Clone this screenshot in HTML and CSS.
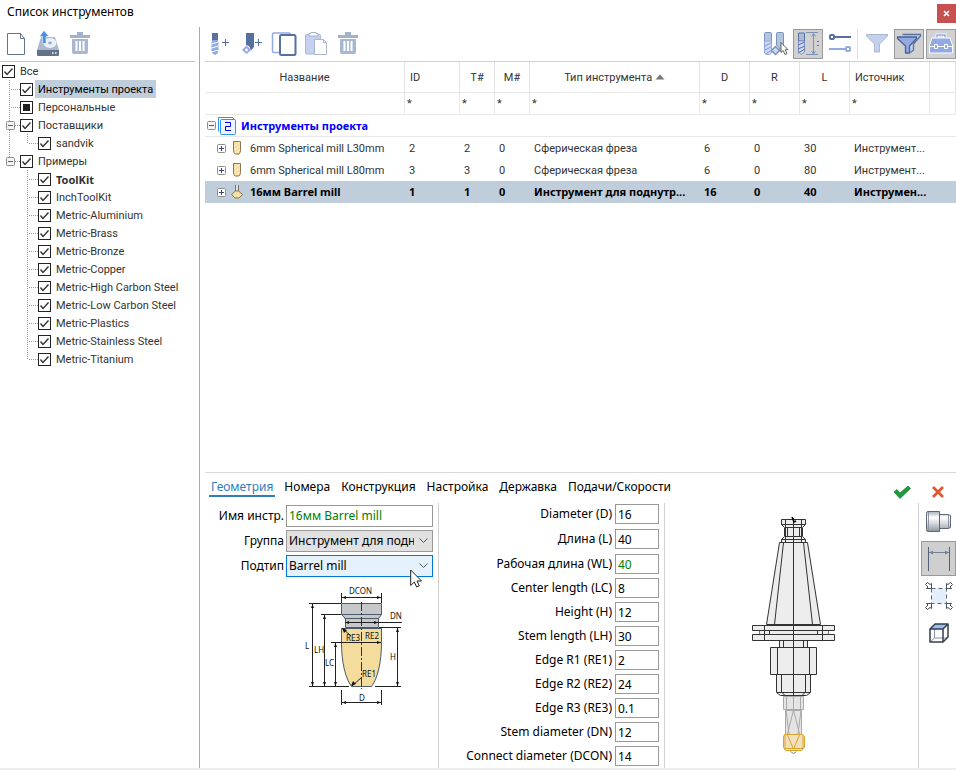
FILE: index.html
```html
<!DOCTYPE html>
<html lang="ru">
<head>
  <meta charset="UTF-8">
  <title>Список инструментов</title>
  <link rel="stylesheet" href="styles.css">
</head>
<body>

  <!-- Shared icons -->
  <svg class="sprite" width="0" height="0">
    <symbol id="i-trash" viewBox="0 0 30 30">
      <path d="M5 6h20v3H5zM12 3h6v3h-6z" fill="#a3b2cb"/>
      <path d="M7 10h16v13q0 2-2 2H9q-2 0-2-2z" fill="#a9b8d0"/>
      <path d="M11.500 12v10M15 12v10M18.500 12v10" stroke="#fff" stroke-width="2"/>
    </symbol>
    <symbol id="i-plus" viewBox="0 0 9 9">
      <rect x=".5" y=".5" width="8" height="8" rx="1" fill="#fff" stroke="#8e8e8e"/>
      <path d="M2 4.500h5M4.500 2v5" stroke="#34487c"/>
    </symbol>
    <symbol id="i-minus" viewBox="0 0 9 9">
      <rect x=".5" y=".5" width="8" height="8" rx="1" fill="#f4f4f4" stroke="#8e8e8e"/>
      <path d="M2 4.500h5" stroke="#3f5fb0"/>
    </symbol>
    <symbol id="i-mill" viewBox="0 0 12 14">
      <path d="M2.500.500h7v9q0 2-1.500 3.500h-4Q2.500 11.500 2.500 9.500z" fill="#f6dfa4" stroke="#85764f"/>
      <path d="M3 5l6-4M3 9l6-4M4 12l5-3" stroke="#fff0c8"/>
    </symbol>
    <symbol id="i-cursor" viewBox="0 0 12 19">
      <path d="M.7 1v15.500l3.600-3.500 2.400 5 2.600-1.200-2.300-4.800h4.600z" fill="#fff" stroke="#222"/>
    </symbol>
  </svg>

  <header class="titlebar">
    <h1>Список инструментов</h1>
    <button class="close" aria-label="Закрыть"><svg width="7" height="7" viewBox="0 0 7 7"><path d="M1 1l5 5M6 1L1 6" stroke="#fff" stroke-width="1.600"/></svg></button>
  </header>

  <div class="window">
    <!-- Libraries -->
    <aside class="sidebar">
      <div class="toolbar">
        <button class="tool" aria-label="Новый"><svg viewBox="0 0 30 30">
          <path d="M6.500 4.500h13l4 5v16h-17z" fill="#fff" stroke="#64748c"/><path d="M19.500 4.500v5h4" fill="none" stroke="#64748c"/></svg></button>
        <button class="tool" aria-label="Импорт"><svg viewBox="0 0 30 30">
          <path d="M8 8h14l4 13H4z" fill="#abb9ca"/><ellipse cx="17" cy="14" rx="6.500" ry="5" fill="#e8f0f8"/><ellipse cx="17" cy="14" rx="2" ry="1.400" fill="#9db4cf"/>
          <path d="M4 21h22v5q0 1-1 1H5q-1 0-1-1z" fill="#627288"/><path d="M19 24h1.500M22 24h1.500" stroke="#fff" stroke-width="1.500"/>
          <path d="M11 1.500l5 6h-3v7H9.500v-7h-3z" fill="#4a8fe2" stroke="#fff" stroke-width=".5"/></svg></button>
        <button class="tool" aria-label="Удалить"><svg><use href="#i-trash"/></svg></button>
      </div>

      <ul class="tree">
        <li><input type="checkbox" id="t0" checked><label for="t0">Все</label></li>
        <li class="selected"><i class="guide tee"></i><input type="checkbox" id="t1" checked><label for="t1">Инструменты проекта</label></li>
        <li><i class="guide tee"></i><input type="checkbox" id="t2" class="mixed"><label for="t2">Персональные</label></li>
        <li><i class="guide tee"><svg><use href="#i-minus"/></svg></i><input type="checkbox" id="t3" checked><label for="t3">Поставщики</label></li>
        <li><i class="guide line"></i><i class="guide end"></i><input type="checkbox" id="t4" checked><label for="t4">sandvik</label></li>
        <li><i class="guide end"><svg><use href="#i-minus"/></svg></i><input type="checkbox" id="t5" checked><label for="t5">Примеры</label></li>
        <li><i class="guide"></i><i class="guide tee"></i><input type="checkbox" id="t6" checked><label for="t6" class="strong">ToolKit</label></li>
        <li><i class="guide"></i><i class="guide tee"></i><input type="checkbox" id="t7" checked><label for="t7">InchToolKit</label></li>
        <li><i class="guide"></i><i class="guide tee"></i><input type="checkbox" id="t8" checked><label for="t8">Metric-Aluminium</label></li>
        <li><i class="guide"></i><i class="guide tee"></i><input type="checkbox" id="t9" checked><label for="t9">Metric-Brass</label></li>
        <li><i class="guide"></i><i class="guide tee"></i><input type="checkbox" id="t10" checked><label for="t10">Metric-Bronze</label></li>
        <li><i class="guide"></i><i class="guide tee"></i><input type="checkbox" id="t11" checked><label for="t11">Metric-Copper</label></li>
        <li><i class="guide"></i><i class="guide tee"></i><input type="checkbox" id="t12" checked><label for="t12">Metric-High Carbon Steel</label></li>
        <li><i class="guide"></i><i class="guide tee"></i><input type="checkbox" id="t13" checked><label for="t13">Metric-Low Carbon Steel</label></li>
        <li><i class="guide"></i><i class="guide tee"></i><input type="checkbox" id="t14" checked><label for="t14">Metric-Plastics</label></li>
        <li><i class="guide"></i><i class="guide tee"></i><input type="checkbox" id="t15" checked><label for="t15">Metric-Stainless Steel</label></li>
        <li><i class="guide"></i><i class="guide end"></i><input type="checkbox" id="t16" checked><label for="t16">Metric-Titanium</label></li>
      </ul>
    </aside>

    <main class="content">
      <div class="toolbar">
        <button class="tool" aria-label="Добавить фрезу"><svg viewBox="0 0 30 30">
          <path d="M7 4h6v7H7z" fill="#56719f"/><path d="M7 11h6v2l1 1-1 2 1 1-1 2 1 1-1 2v2l-3 2-3-2v-2l-1-1 1-2-1-1 1-2-1-1 1-2z" fill="#93a9e4"/>
          <path d="M6.500 15l7-2M6.500 19l7-2M6.500 23l7-2" stroke="#fff"/><path d="M17 13.500h7M20.500 10v7" stroke="#56719f"/></svg></button>
        <button class="tool" aria-label="Добавить резец"><svg viewBox="0 0 30 30">
          <path d="M9 4h8v14l-3 3.500-2-4.500-3-1z" fill="#56719f"/><path d="M9.500 16.500l4.500 4.500-4.500 4-4.500-4z" fill="#93a9e4"/><circle cx="9.500" cy="21" r="1.400" fill="#fff"/>
          <path d="M18 13.500h7M21.500 10v7" stroke="#56719f"/></svg></button>
        <button class="tool" aria-label="Копировать"><svg viewBox="0 0 30 30">
          <rect x="3.500" y="4" width="18" height="19.500" rx="1.500" fill="none" stroke="#93a9e4" stroke-width="1.500"/><rect x="11" y="6" width="15.500" height="20" rx="1.500" fill="#fff" stroke="#56719f" stroke-width="2"/></svg></button>
        <button class="tool" aria-label="Вставить"><svg viewBox="0 0 30 30">
          <rect x="4.500" y="5.500" width="15" height="19.500" rx="1" fill="#c5d1ee" stroke="#a9b8dc"/><path d="M8 7V4.500h2V3.500h5v1h2V7z" fill="#fff" stroke="#a3b2cb"/>
          <path d="M13.500 10.500h9l3 3v12h-12z" fill="#fff" stroke="#a9b8d0"/><path d="M22.500 10.500v3h3" fill="none" stroke="#a9b8d0"/></svg></button>
        <button class="tool" aria-label="Удалить"><svg><use href="#i-trash"/></svg></button>
        <span class="spacer"></span>
        <button class="tool" aria-label="Выбор типа"><svg viewBox="0 0 30 30">
          <path d="M3.500 4.500q0-1 1-1h5q1 0 1 1v8h-7z" fill="#b4c4dc" stroke="#7b93b8"/><path d="M3.500 12h7v12l-2 1.500h-3L3.500 24z" fill="#cdd7f3" stroke="#93a9e4"/><path d="M4 17l6-3M4 21l6-3M4.500 25l5-3" stroke="#7f97d8"/>
          <path d="M15.500 4.500q0-1 1-1h5q1 0 1 1v14l-3 4-2-5-2-1z" fill="#b4c4dc" stroke="#7b93b8"/><path d="M14.500 17.500l4 4-4 4-4-4z" fill="#cdd7f3" stroke="#7b93b8" stroke-width="1.500"/>
          <path d="M20 13.500v10l2.200-2 1.800 4 2-1-1.800-3.800h2.800z" fill="#fff" stroke="#555" stroke-width=".9"/></svg></button>
        <button class="tool active" aria-label="Длина"><svg viewBox="0 0 30 30">
          <path d="M5.500 4h6v8h-6z" fill="#a9bcda" stroke="#56719f"/><path d="M5.500 12h6v11l-3 2.500-3-2.500z" fill="#cdd7f3" stroke="#8095c6"/><path d="M5 16l7-3M5 20l7-3M5 24l7-4" stroke="#56719f"/>
          <path d="M13 3.500h12M13 25.500h12" stroke="#7d92b5"/><path d="M20.500 5v19M18.500 7.500l2-3 2 3M18.500 22l2 3 2-3" fill="none" stroke="#7d92b5"/><path d="M24 12.500h2M24 16.500h2" stroke="#56719f"/></svg></button>
        <button class="tool" aria-label="Связи"><svg viewBox="0 0 30 30">
          <path d="M9 8h17" stroke="#56719f" stroke-width="2"/><rect x="5" y="6" width="4" height="4" rx="1" fill="#fff" stroke="#56719f" stroke-width="2"/>
          <path d="M4 20h17" stroke="#93a9e4" stroke-width="2"/><rect x="21" y="18" width="4" height="4" rx="1" fill="#fff" stroke="#93a9e4" stroke-width="2"/></svg></button>
        <span class="separator"></span>
        <button class="tool" aria-label="Фильтр"><svg viewBox="0 0 30 30">
          <path d="M4.500 5.500h21v1.500l-8 8v8h-5v-8l-8-8z" fill="#c3d0ee" stroke="#a9b8d0" stroke-linejoin="round"/></svg></button>
        <button class="tool active" aria-label="Фильтр по проекту"><svg viewBox="0 0 30 30">
          <path d="M8.500 5.500h18v1.500l-7 8v6l-3 2.500" fill="#c3d0ee" stroke="#56719f" stroke-width="1.300"/><path d="M3.500 8h19v1.500l-7 7.500v7h-4v-7l-8-7.500z" fill="#93a9e4" stroke="#48638f" stroke-width="1.300" stroke-linejoin="round"/></svg></button>
        <button class="tool active" aria-label="Ящик инструментов"><svg viewBox="0 0 30 30">
          <path d="M11 9V6h8v3" fill="none" stroke="#fff" stroke-width="3"/><path d="M11 9V6h8v3" fill="none" stroke="#93a9e4" stroke-width="1.500"/>
          <path d="M6 9h18l2.500 7v8h-23v-8z" fill="#93a9e4" stroke="#fff"/><path d="M4 17.500h22" stroke="#fff"/><path d="M8.500 15.500h3v4h-3zM18.500 15.500h3v4h-3z" fill="#93a9e4" stroke="#fff"/></svg></button>
      </div>

      <!-- Tool list -->
      <div class="list">
        <table>
          <colgroup>
            <col><col class="w55"><col class="w35"><col class="w35"><col class="w170"><col class="w50"><col class="w50"><col class="w50"><col class="w80"><col class="w26">
          </colgroup>
          <thead>
            <tr><th>Название</th><th class="left">ID</th><th>T#</th><th>M#</th><th>Тип инструмента <svg class="sort" width="10" height="6" viewBox="0 0 10 6"><path d="M5 .5L9.500 5.500H.5z" fill="#777"/></svg></th><th>D</th><th>R</th><th>L</th><th class="left">Источник</th><th></th></tr>
            <tr class="filter"><td></td><td>*</td><td>*</td><td>*</td><td>*</td><td>*</td><td>*</td><td>*</td><td>*</td><td></td></tr>
          </thead>
          <tbody>
            <tr class="group"><td colspan="10"><div class="cell">
              <svg width="9" height="9"><use href="#i-minus"/></svg>
              <svg width="18" height="18" viewBox="0 0 18 18"><path d="M.5 14.500V.500h14l2 2" fill="#fff" stroke="#2f95e8"/><rect x="2.500" y="2.500" width="15" height="15" rx="1" fill="#eef7ff" stroke="#2f95e8"/><path d="M7 5.500h5.500v4h-5v4H13" fill="none" stroke="#00f"/></svg>
              <span>Инструменты проекта</span></div></td></tr>
            <tr><td><div class="cell name"><svg width="9" height="9"><use href="#i-plus"/></svg><svg width="12" height="14"><use href="#i-mill"/></svg><span>6mm Spherical mill L30mm</span></div></td><td>2</td><td>2</td><td>0</td><td>Сферическая фреза</td><td>6</td><td>0</td><td>30</td><td>Инструмент...</td><td></td></tr>
            <tr><td><div class="cell name"><svg width="9" height="9"><use href="#i-plus"/></svg><svg width="12" height="14"><use href="#i-mill"/></svg><span>6mm Spherical mill L80mm</span></div></td><td>3</td><td>3</td><td>0</td><td>Сферическая фреза</td><td>6</td><td>0</td><td>80</td><td>Инструмент...</td><td></td></tr>
            <tr class="selected"><td><div class="cell name"><svg width="9" height="9"><use href="#i-plus"/></svg><svg width="12" height="14" viewBox="0 0 12 14"><path d="M4.500 0v6M7.500 0v6" stroke="#777"/><path d="M6 0v6" stroke="#ddd" stroke-width="2"/><path d="M4.500 6h3l4 3.500-3.500 3.500H4L.5 9.500z" fill="#f6dfa4" stroke="#85764f"/></svg><span>16мм Barrel mill</span></div></td><td>1</td><td>1</td><td>0</td><td>Инструмент для поднутр...</td><td>16</td><td>0</td><td>40</td><td>Инструмен...</td><td></td></tr>
          </tbody>
        </table>
      </div>

      <!-- Selected tool -->
      <section class="editor">
        <div class="editor-head">
          <nav class="tabs">
            <a href="#" class="current">Геометрия</a><a href="#">Номера</a><a href="#">Конструкция</a><a href="#">Настройка</a><a href="#">Державка</a><a href="#">Подачи/Скорости</a>
          </nav>
          <div class="confirm">
            <button aria-label="Применить"><svg width="18" height="14" viewBox="0 0 18 14"><path d="M1 7l3-2.500 3 3.500L15 1l2.500 2.500L7 13.500z" fill="#1f9a3d" stroke="#157a2c" stroke-width=".7"/></svg></button>
            <button aria-label="Отмена"><svg width="14" height="14" viewBox="0 0 14 14"><path d="M2 2l10 10M12 2L2 12" stroke="#e2562c" stroke-width="2.800"/></svg></button>
          </div>
        </div>

        <div class="editor-body">
          <div class="general">
            <div class="field"><label for="name">Имя инстр.</label><input type="text" id="name" class="changed" value="16мм Barrel mill"></div>
            <div class="field"><label for="kind">Группа</label><select id="kind"><option>Инструмент для поднутрений</option></select></div>
            <div class="field"><label for="subtype">Подтип</label><span class="pointed"><select id="subtype" class="hot"><option>Barrel mill</option></select><svg class="cursor" width="12" height="19"><use href="#i-cursor"/></svg></span></div>

            <svg class="scheme" width="106" height="124" viewBox="300 584 106 124">
              <path d="M341.500 603.500h40v11l-3 4v9h-33v-9l-4-4z" fill="#c6c8ca" stroke="#4d5a69"/>
              <path d="M341.500 614.500h40M344.500 618.500h34" stroke="#4d5a69"/>
              <path d="M341.500 628.500h40v14c0 20-4 36-10 44h-20c-6-8-10-24-10-44z" fill="#f3dc9c" stroke="#4d5a69"/>
              <path d="M361.500 602v87" stroke="#333" stroke-dasharray="9 2 2 2"/>
              <g class="dims">
                <path d="M341.500 593v10M381.500 593v10M342 597.500h39M309 603.500h32M312.500 604v82M321 614.500h20M324.500 615v71M331 642.500h50M335.500 643v43M309 686.500h40M375 686.500h26M379 627.500h22M397.500 628v58M341.500 690v15M381.500 690v15M342 702.500h39M345 622.500h57M342 628l9 8M352 686l10-9" fill="none"/>
                <path d="M342 597.500l4-1.500v3zM381 597.500l-4-1.500v3zM312.500 604l-1.500 4h3zM312.500 686l-1.500-4h3zM324.500 615l-1.500 4h3zM324.500 686l-1.500-4h3zM335.500 643l-1.500 4h3zM335.500 686l-1.500-4h3zM397.500 628l-1.500 4h3zM397.500 686l-1.500-4h3zM342 702.500l4-1.500v3zM381 702.500l-4-1.500v3zM345 622.500l4-1.500v3zM378 622.500l-4-1.500v3zM381 642.500l-4-1.500v3zM342 628l5 2-3 3zM351 686l2-5 3 3z" stroke="none" fill="#111"/>
              </g>
              <g class="marks">
                <text x="349" y="594">DCON</text><text x="390" y="619">DN</text><text x="346" y="641">RE3</text><text x="365" y="639">RE2</text>
                <text x="362" y="677">RE1</text><text x="305" y="649">L</text><text x="314" y="653">LH</text><text x="325" y="666">LC</text><text x="390" y="660">H</text><text x="359" y="701">D</text>
              </g>
            </svg>
          </div>

          <div class="sizes">
            <label for="s1">Diameter (D)</label><input type="text" id="s1" value="16">
            <label for="s2">Длина (L)</label><input type="text" id="s2" value="40">
            <label for="s3">Рабочая длина (WL)</label><input type="text" id="s3" class="changed" value="40">
            <label for="s4">Center length (LC)</label><input type="text" id="s4" value="8">
            <label for="s5">Height (H)</label><input type="text" id="s5" value="12">
            <label for="s6">Stem length (LH)</label><input type="text" id="s6" value="30">
            <label for="s7">Edge R1 (RE1)</label><input type="text" id="s7" value="2">
            <label for="s8">Edge R2 (RE2)</label><input type="text" id="s8" value="24">
            <label for="s9">Edge R3 (RE3)</label><input type="text" id="s9" value="0.1">
            <label for="s10">Stem diameter (DN)</label><input type="text" id="s10" value="12">
            <label for="s11">Connect diameter (DCON)</label><input type="text" id="s11" value="14">
          </div>

          <div class="preview">
            <svg width="90" height="250" viewBox="748 510 90 250">
              <g fill="#ededed" stroke="#333">
                <path d="M781.500 519.500h24v5l-3 3v9l3 3v3h-24v-3l3-3v-9l-3-3z"/>
                <path d="M781.500 524.500h24M785 527.500h17M785 536.500h17M781.500 539.500h24M785.500 519.500v23M801.500 519.500v23M787.500 527v10M799.500 527v10" fill="none"/>
                <path d="M779.500 542.500h28l13 82h-54z"/>
                <path d="M783.500 542.500l-9 82M803.500 542.500l9 82" fill="none"/>
                <path d="M759.500 630.500h69v4h-69z" stroke="#777"/>
                <path d="M769.500 630v5M817.500 630v5"/>
                <path d="M752.500 625.500h82v5h-82zM752.500 634.500h82v6h-82zM779.500 640.500h28v7h-28zM770.500 647.500h46v27h-46zM776.500 674.500h34v18l-4 3h-26l-4-3z"/>
                <path d="M764.500 625v15M822.500 625v15M783.500 640v7M803.500 640v7M777.500 647v27M809.500 647v27M781.500 674v18l3 3M805.500 674v18l-3 3M777 692.500h33" fill="none"/>
                <path d="M783.500 696.500h20v13h-20zM785.500 710.500h16v24h-16z" fill="#e4e4e4" stroke="#a9a9a9"/>
                <path d="M786.500 696v13M800.500 696v13M793.500 710l-6 24M793.500 710l6 24M786 710l3 24M801 710l-3 24M793.500 696v14" fill="none" stroke="#a9a9a9"/>
                <path d="M784.500 734.500h18l2 2v11l-3 3h-16l-2-3v-11z" fill="#f1dfbd" stroke="#d9a52f"/>
                <path d="M787.500 735l6 14 6-14M785 735v14M803 735v14M784 748.500h20" fill="none" stroke="#d9a52f"/>
                <path d="M790.500 751.500l3 2 3-2" fill="none" stroke="#888"/>
                <path d="M793.500 518v178"/>
                <path d="M792 517l2 5 2-1" fill="none" stroke="#000" stroke-width="1.500"/>
              </g>
            </svg>
          </div>

          <div class="rail">
            <button class="view" aria-label="Держатель"><svg width="28" height="24" viewBox="0 0 28 24">
              <defs><linearGradient id="metal" x2="0" y2="1"><stop offset="0" stop-color="#a9b1bb"/><stop offset=".3" stop-color="#fff"/><stop offset=".6" stop-color="#d4d8dd"/><stop offset="1" stop-color="#8d96a2"/></linearGradient></defs>
              <path d="M1.500 3.500q0-2 1-2h12v20h-12q-1 0-1-2zM14.500 4.500h9l2 1v12l-2 1h-9z" fill="url(#metal)" stroke="#5d6876"/><path d="M3.500 2v19M23.500 5v13" stroke="#8d96a2"/></svg></button>
            <button class="view active" aria-label="Размеры"><svg width="28" height="24" viewBox="0 0 28 24"><path d="M3.500 0v24M24.500 0v24" stroke="#52617a"/><path d="M4 5.500h20" stroke="#74829a"/><path d="M4 5.500l4-2v4zM24 5.500l-4-2v4z" fill="#74829a"/></svg></button>
            <button class="view" aria-label="Показать всё"><svg width="28" height="28" viewBox="0 0 28 28">
              <rect x="6.500" y="6.500" width="15" height="15" fill="#e2effa" stroke="#5a6678" stroke-dasharray="4 3"/>
              <g fill="#fff" stroke="#454f5e" stroke-linejoin="round"><path id="corner" d="M.5 2.500l2-2L5 2.500 6.500 1.500V6.500H1.500L3 5z"/><use href="#corner" transform="matrix(-1 0 0 1 28 0)"/><use href="#corner" transform="matrix(1 0 0 -1 0 28)"/><use href="#corner" transform="matrix(-1 0 0 -1 28 28)"/></g></svg></button>
            <button class="view" aria-label="Вид"><svg width="20" height="20" viewBox="0 0 20 20"><path d="M6 1h13l-5 5H1z" fill="#9dbff0"/><path d="M5.500 6v9H14M5.500 15L1 19M14 15h4.500" fill="none" stroke="#8490a0"/><path d="M1 6h13v13H1zM1 6l5-5h13l-5 5M19 1v13l-5 5" fill="none" stroke="#333e4e" stroke-width="1.500" stroke-linejoin="round"/></svg></button>
          </div>
        </div>
      </section>
    </main>
  </div>

</body>
</html>
```
FILE: styles.css
```css
* {
  box-sizing: border-box;
}

body {
  margin: 0;
  height: 100vh;
  display: flex;
  flex-direction: column;
  background: #fff;
  border-bottom: 2px solid #ececec;
  font-family: "Noto Sans", "Open Sans", sans-serif;
  font-size: 12px;
  color: #000;
}

button {
  padding: 0;
  border: none;
  background: none;
  cursor: pointer;
}

svg {
  display: block;
}

.sprite {
  position: absolute;
}

.titlebar {
  display: flex;
  justify-content: space-between;
  padding: 4px 0;
}

h1 {
  margin: 0;
  padding-left: 7px;
  font-size: 12px;
  font-weight: normal;
  line-height: 16px;
}

.close {
  display: flex;
  align-items: center;
  justify-content: center;
  width: 19px;
  height: 19px;
  background: #c75050;
}

.window {
  flex: 1;
  display: flex;
  min-height: 0;
}

/* Toolbars */
.toolbar {
  display: flex;
  gap: 2px;
  height: 35px;
  padding-top: 2px;
  border-bottom: 1px solid #d0d0d0;
}

.tool {
  width: 30px;
  height: 30px;
}

.tool svg {
  width: 30px;
  height: 30px;
}

.tool.active {
  background: #d1d1d1;
  border: 1px solid #999;
}

.tool.active svg {
  margin: -1px;
}

.spacer {
  flex: 1;
}

.separator {
  width: 3px;
  height: 30px;
  border-left: 1px solid #ddd;
}

/* Library tree */
.sidebar {
  width: 200px;
  border-right: 1px solid #aaa;
  padding-right: 4px;
}

.sidebar .toolbar {
  padding-left: 1px;
  border-color: #c4c4c4;
}

.tree {
  list-style: none;
  margin: 0;
  padding: 0 0 0 2px;
  font-family: Roboto, "Noto Sans", sans-serif;
  font-size: 11px;
  color: #333;
}

.tree li {
  display: flex;
  align-items: center;
  height: 18px;
}

.tree label {
  margin-left: 2px;
  padding: 1px 3px 0;
  line-height: 17px;
  white-space: nowrap;
}

.tree .selected label {
  background: #c0cddb;
  color: #000;
}

.tree .strong {
  font-family: "Noto Sans", sans-serif;
  font-weight: bold;
}

.tree input {
  appearance: none;
  flex: none;
  width: 13px;
  height: 13px;
  margin: 0;
  border: 1px solid #222;
  background: #fff center / 11px 11px no-repeat;
}

.tree input:checked {
  background-image: url("data:image/svg+xml,%3Csvg xmlns='http://www.w3.org/2000/svg' viewBox='0 0 11 11'%3E%3Cpath d='M1.5 5.500l2.500 3L9.500 2.500' fill='none' stroke='%23333' stroke-width='1.400'/%3E%3C/svg%3E");
}

.tree .mixed {
  background-image: linear-gradient(#222, #222);
  background-size: 7px 7px;
}

.guide {
  flex: none;
  display: flex;
  align-items: center;
  width: 18px;
  height: 18px;
  padding-left: 4px;
  background-repeat: no-repeat;
}

.guide svg {
  width: 9px;
  height: 9px;
}

.line,
.tee,
.end {
  background-image: repeating-linear-gradient(#999 0 1px, transparent 1px 2px), repeating-linear-gradient(90deg, #999 0 1px, transparent 1px 2px);
  background-position: 7px 0, 9px 9px;
  background-size: 1px 18px, 9px 1px;
}

.line {
  background-size: 1px 18px, 0 0;
}

.end {
  background-size: 1px 10px, 9px 1px;
}

/* Tool list */
.content {
  flex: 1;
  min-width: 0;
  display: flex;
  flex-direction: column;
  padding-left: 5px;
}

.list {
  flex: 1;
  min-height: 0;
  overflow: hidden;
}

table {
  width: 100%;
  table-layout: fixed;
  border-collapse: separate;
  border-spacing: 0;
  font-family: Roboto, "Noto Sans", sans-serif;
  font-size: 11px;
  color: #333;
}

.w26 { width: 26px; }
.w35 { width: 35px; }
.w50 { width: 50px; }
.w55 { width: 55px; }
.w80 { width: 80px; }
.w170 { width: 170px; }

th {
  height: 31px;
  padding: 0;
  border-right: 1px solid #e2e2e2;
  border-bottom: 1px solid #e8e8e8;
  font-weight: normal;
}

th.left {
  padding-left: 5px;
  text-align: left;
}

.sort {
  display: inline-block;
  vertical-align: 1px;
}

td {
  height: 22px;
  padding: 0 4px;
  white-space: nowrap;
}

.filter td {
  padding: 0 2px;
  border-right: 1px solid #e8e8e8;
  border-bottom: 1px solid #e8e8e8;
}

.group td {
  padding: 0 2px;
  border-bottom: 1px solid #e8e8e8;
  color: #00f;
  font-family: "Noto Sans", sans-serif;
  font-weight: bold;
}

.cell {
  display: flex;
  align-items: center;
  gap: 2px;
}

.group span {
  padding-left: 3px;
}

.name {
  gap: 5px;
  padding-left: 8px;
}

.name span {
  padding-left: 2px;
}

tr.selected td {
  background: #c0cddb;
  color: #000;
  font-family: "Noto Sans", sans-serif;
  font-weight: bold;
  line-height: 14px;
}

/* Editor */
.editor {
  border-top: 1px solid #d8d8d8;
}

.editor-head {
  display: flex;
  justify-content: space-between;
  height: 30px;
}

.tabs {
  display: flex;
  align-items: flex-start;
  gap: 7px;
  padding: 5px 0 0 4px;
}

.tabs a {
  padding: 0 2px;
  line-height: 17px;
  color: #000;
  text-decoration: none;
  white-space: nowrap;
}

.tabs .current {
  color: #2f7cbf;
  border-bottom: 2px solid #2f7cbf;
}

.confirm {
  display: flex;
  align-items: center;
  gap: 20px;
  padding: 8px 11px 0 0;
}

.editor-body {
  display: flex;
  height: 265px;
}

.general {
  width: 234px;
  padding-right: 5px;
  border-right: 1px solid #d0d0d0;
}

.field {
  display: flex;
  align-items: center;
  justify-content: flex-end;
  gap: 2px;
  height: 25px;
}

.field input,
.field select {
  width: 147px;
  height: 22px;
}

input[type="text"],
select {
  border: 1px solid #999;
  padding: 0 2px;
  font: inherit;
  color: #000;
}

input[type="text"].changed {
  color: #008000;
}

select {
  appearance: none;
  padding-right: 18px;
  background: #e1e1e1 url("data:image/svg+xml,%3Csvg xmlns='http://www.w3.org/2000/svg' viewBox='0 0 9 6'%3E%3Cpath d='M.5 .5l4 4 4-4' fill='none' stroke='%23555'/%3E%3C/svg%3E") right 4px center / 9px 6px no-repeat;
}

select.hot {
  background-color: #e5f1fb;
  border-color: #0078d7;
}

.pointed {
  position: relative;
}

.cursor {
  position: absolute;
  right: 11px;
  top: 14px;
}

.scheme {
  margin: 6px 0 0 95px;
}

.dims {
  stroke: #222;
  stroke-width: 1px;
}

.marks {
  font-size: 8px;
  fill: #111;
}

.sizes {
  display: grid;
  grid-template-columns: 1fr 44px;
  grid-template-rows: 25px 25px;
  grid-auto-rows: 24px;
  column-gap: 3px;
  width: 226px;
  padding: 1px 5px 0 5px;
  border-right: 1px solid #d0d0d0;
  text-align: right;
}

.sizes label {
  line-height: 20px;
  white-space: nowrap;
}

.sizes input {
  width: 44px;
  height: 20px;
}

.preview {
  flex: 1;
  display: flex;
  justify-content: center;
  padding: 7px 0 0 2px;
}

.rail {
  display: flex;
  flex-direction: column;
  gap: 2px;
  padding: 1px 0 0 2px;
  border-left: 1px solid #d0d0d0;
}

.view {
  display: flex;
  align-items: center;
  justify-content: center;
  width: 35px;
  height: 35px;
}

.view.active {
  background: #cfcfcf;
  border: 1px solid #999;
}
```
